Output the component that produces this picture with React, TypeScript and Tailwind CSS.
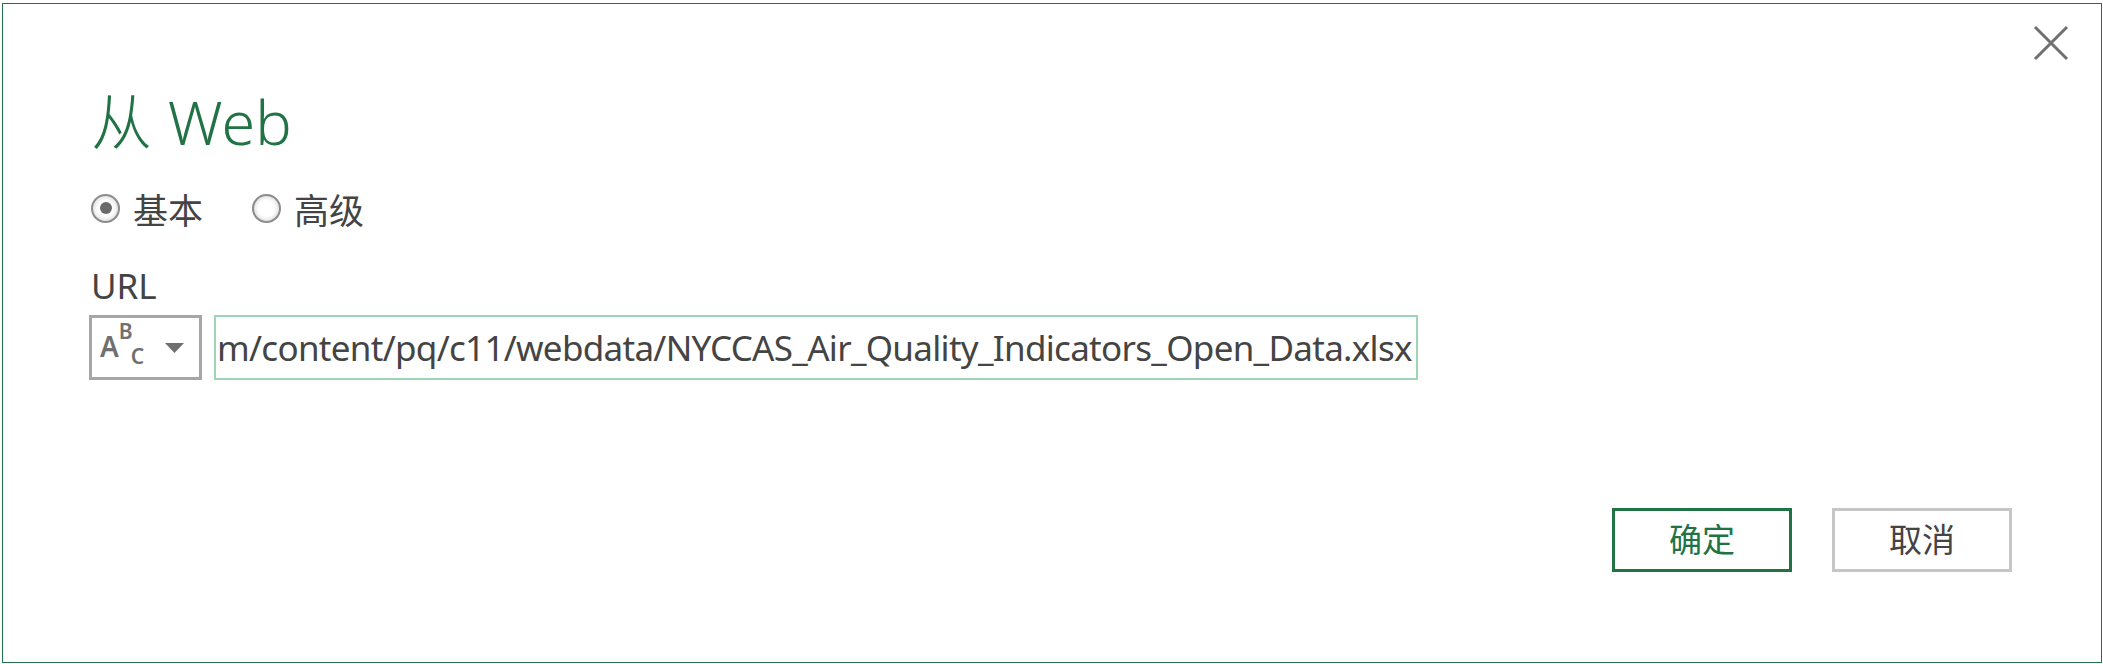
const font = "font-['Noto_Sans','Noto_Sans_CJK_SC',sans-serif]";

function Radio({ checked, label }: { checked: boolean; label: string }) {
  return (
    <label className="flex items-center gap-[13px]">
      <span className="w-[29px] h-[29px] rounded-full border-2 border-[#8c8c8c] bg-[radial-gradient(circle,#ffffff_45%,#e0e0e0_75%,#b0b0b0_100%)] flex items-center justify-center mt-[-6px]">
        {checked && <span className="w-[12px] h-[12px] rounded-full bg-[#6a6a6a]" />}
      </span>
      <span className="text-[35px] leading-[40px] text-[#444444]">{label}</span>
    </label>
  );
}

export default function App() {
  return (
    <div className={`w-[2103px] h-[664px] bg-white pl-[2px] pt-[3px] ${font}`}>
      <div className="relative w-[2100px] h-[660px] border border-[#217346] bg-white flex flex-col pl-[88px] pr-[89px]">
        <button className="absolute top-[19px] right-[30px] w-[40px] h-[40px] flex items-center justify-center" aria-label="关闭">
          <svg width="36" height="36" viewBox="0 0 36 36">
            <path d="M2 2L34 34M34 2L2 34" stroke="#707070" strokeWidth="3" />
          </svg>
        </button>

        <h1 className="mt-[78px] text-[61px] leading-[80px] font-light text-[#217346]">从 Web</h1>

        <div className="mt-[29px] flex items-center gap-[49px]">
          <Radio checked label="基本" />
          <Radio checked={false} label="高级" />
        </div>

        <div className="mt-[35px] text-[35px] leading-[40px] text-[#444444]">URL</div>

        <div className="mt-[9px] flex gap-[12px] ml-[-2px]">
          <div className="w-[113px] h-[65px] border-[3px] border-[#a6a6a6] flex items-start pl-[8px] text-[#707070] font-semibold">
            <span className="text-[28px] leading-none mt-[14px]">A</span>
            <span className="text-[21px] leading-none mt-[3px]">B</span>
            <span className="text-[21px] leading-none mt-[28px] ml-[-2px]">C</span>
            <svg className="ml-[21px] mt-[25px]" width="19" height="10" viewBox="0 0 19 10">
              <path d="M0 0H19L9.5 10Z" fill="#707070" />
            </svg>
          </div>
          <div className="w-[1204px] h-[65px] border-2 border-[#9fd5b7] flex items-center overflow-hidden pl-[1px]">
            <span className="text-[35px] leading-none text-[#444444] whitespace-nowrap tracking-[-0.7px]">
              m/content/pq/c11/webdata/NYCCAS_Air_Quality_Indicators_Open_Data.xlsx
            </span>
          </div>
        </div>

        <div className="mt-auto mb-[90px] flex justify-end gap-[40px]">
          <button className="w-[180px] h-[64px] border-[3px] border-[#217346] text-[33px] text-[#217346] flex items-center justify-center">
            确定
          </button>
          <button className="w-[180px] h-[64px] border-[3px] border-[#c6c6c6] text-[33px] text-[#444444] flex items-center justify-center">
            取消
          </button>
        </div>
      </div>
    </div>
  );
}
